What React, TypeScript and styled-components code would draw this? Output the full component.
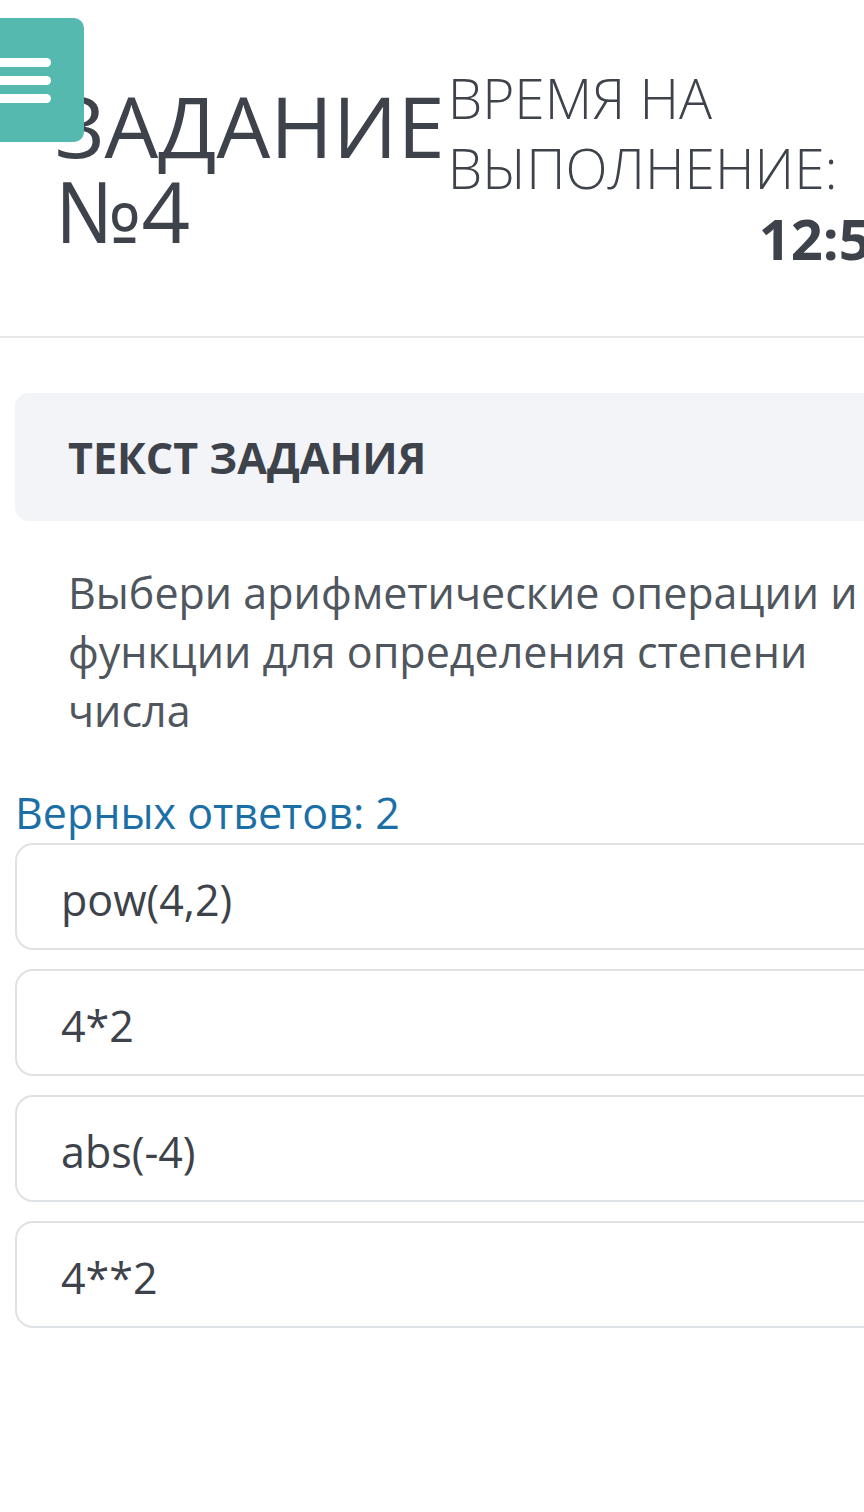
import styled, { createGlobalStyle } from "styled-components";

const GlobalStyle = createGlobalStyle`
  html, body {
    margin: 0;
    padding: 0;
    background: #ffffff;
    overflow: hidden;
  }
  body {
    font-family: "Open Sans", "Noto Sans", sans-serif;
    color: #3d424b;
  }
`;

const Page = styled.div`
  position: relative;
  width: 940px;
  padding-bottom: 120px;
`;

const MenuButton = styled.button`
  position: absolute;
  top: 18px;
  left: -24px;
  width: 108px;
  height: 124px;
  border: none;
  border-radius: 10px;
  background: #55b9b0;
  padding: 0 0 0 24px;
  display: flex;
  flex-direction: column;
  justify-content: center;
  gap: 9px;
  z-index: 2;
`;

const MenuBar = styled.span`
  display: block;
  width: 75px;
  height: 9px;
  margin-left: -24px;
  border-radius: 5px;
  background: #ffffff;
`;

const Header = styled.header`
  height: 336px;
  padding-left: 55px;
  display: flex;
  align-items: center;
  gap: 3px;
  border-bottom: 2px solid #e6e7e8;
`;

const Title = styled.h1`
  margin: 0;
  font-size: 85px;
  line-height: 85px;
  font-weight: 400;
  color: #3d424b;
`;

const Timer = styled.div`
  width: 455px;
  font-size: 55px;
  line-height: 70px;
  font-weight: 300;
  color: #3d424b;
`;

const TimeValue = styled.div`
  text-align: right;
  font-size: 56px;
  font-weight: 700;
`;

const Content = styled.main`
  padding: 55px 0 0 15px;
`;

const SectionHead = styled.div`
  height: 128px;
  padding-left: 53px;
  display: flex;
  align-items: center;
  border-radius: 14px;
  background: #f3f4f7;
  font-size: 43px;
  font-weight: 700;
  color: #3d424b;
`;

const Question = styled.p`
  max-width: 800px;
  margin: 42px 0 0 53px;
  font-size: 43px;
  line-height: 59px;
  color: #50565e;
`;

const AnswerCount = styled.div`
  margin: 42px 0 0 0;
  font-size: 43px;
  line-height: 61px;
  color: #1b6fa6;
`;

const Options = styled.div`
  display: flex;
  flex-direction: column;
  gap: 19px;
`;

const Option = styled.label`
  box-sizing: border-box;
  height: 107px;
  padding: 6px 44px 0;
  display: flex;
  align-items: center;
  border: 2px solid #dfe2e5;
  border-radius: 18px;
  background: #ffffff;
  font-size: 43px;
  color: #3d424b;
`;

const options = ["pow(4,2)", "4*2", "abs(-4)", "4**2"];

export default function App() {
  return (
    <Page>
      <GlobalStyle />
      <MenuButton aria-label="Меню">
        <MenuBar />
        <MenuBar />
        <MenuBar />
      </MenuButton>
      <Header>
        <Title>
          ЗАДАНИЕ
          <br />
          №4
        </Title>
        <Timer>
          ВРЕМЯ НА
          <br />
          ВЫПОЛНЕНИЕ:
          <TimeValue>12:53</TimeValue>
        </Timer>
      </Header>
      <Content>
        <SectionHead>ТЕКСТ ЗАДАНИЯ</SectionHead>
        <Question>
          Выбери арифметические операции и функции для определения степени
          числа
        </Question>
        <AnswerCount>Верных ответов: 2</AnswerCount>
        <Options>
          {options.map((item) => (
            <Option key={item}>{item}</Option>
          ))}
        </Options>
      </Content>
    </Page>
  );
}
